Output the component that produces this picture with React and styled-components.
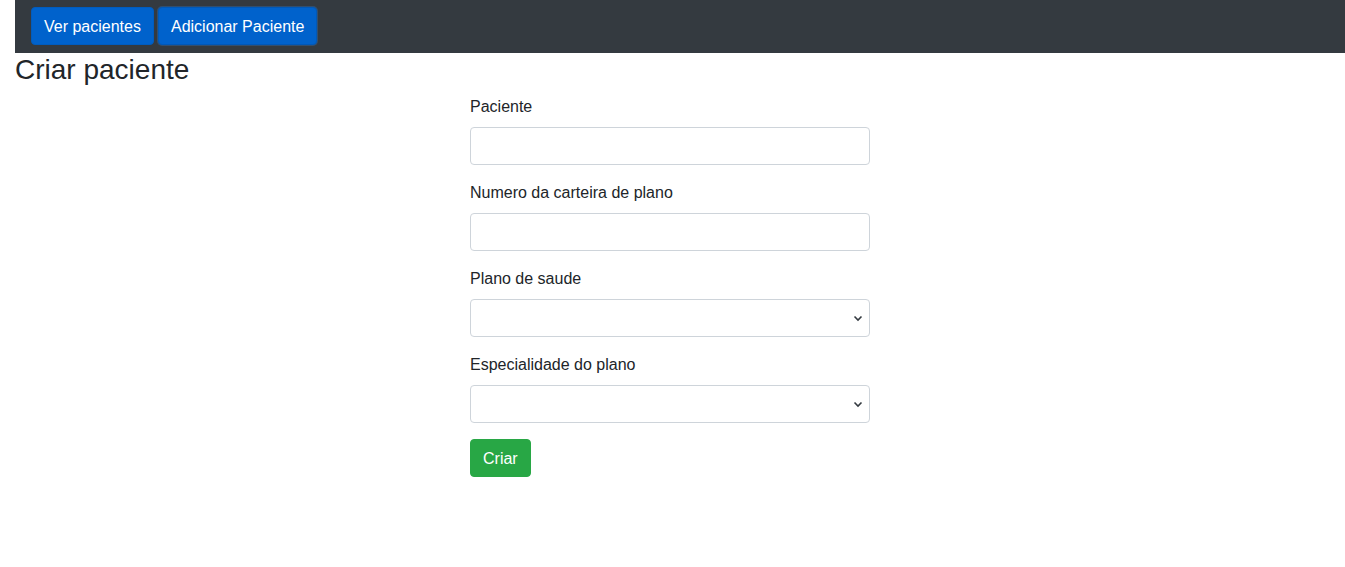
import React from 'react'
import styled, { createGlobalStyle } from 'styled-components'

const GlobalStyle = createGlobalStyle`
  body {
    margin: 0;
    font-family: "Liberation Sans", Arial, sans-serif;
    font-size: 16px;
    line-height: 1.5;
    color: #212529;
    background: #fff;
  }
  * { box-sizing: border-box; }
`

const Page = styled.div`
  padding-left: 15px;
`

const Navbar = styled.nav`
  background: #343a40;
  height: 53px;
  padding: 7px 16px 8px;
  display: flex;
  align-items: flex-start;
  gap: 4px;
`

const NavButton = styled.button`
  height: 38px;
  padding: 7px 12px 5px;
  font-family: inherit;
  font-size: 16px;
  line-height: 24px;
  color: #fff;
  background: #0062cc;
  border: 1px solid ${(props) => (props.$focused ? '#0058b8' : '#005cbf')};
  border-radius: 4px;
  box-shadow: ${(props) => (props.$focused ? '0 0 0 1px rgba(38, 143, 255, 0.25)' : 'none')};
  cursor: pointer;
`

const Title = styled.h3`
  margin: 0 0 8px;
  font-size: 28px;
  font-weight: 500;
  line-height: 1.2;
`

const FormRow = styled.div`
  display: flex;
  justify-content: center;
  padding-right: 20px;
`

const Form = styled.form`
  width: 400px;
`

const Group = styled.div`
  margin-bottom: 16px;
`

const Label = styled.label`
  display: block;
  margin-bottom: 8px;
`

const Input = styled.input`
  display: block;
  width: 100%;
  height: 38px;
  padding: 6px 12px;
  font: inherit;
  border: 1px solid #ced4da;
  border-radius: 4px;
  background: #fff;
`

const SelectBox = styled.div`
  position: relative;
  height: 38px;
  border: 1px solid #ced4da;
  border-radius: 4px;
  background: #fff;
`

const Chevron = styled.svg`
  position: absolute;
  right: 6px;
  top: 14px;
`

const SubmitButton = styled.button`
  height: 38px;
  padding: 7px 12px 5px;
  font-family: inherit;
  font-size: 16px;
  line-height: 24px;
  color: #fff;
  background: #28a745;
  border: 1px solid #28a745;
  border-radius: 4px;
  cursor: pointer;
`

function Select() {
  return (
    <SelectBox>
      <Chevron width="10" height="8" viewBox="0 0 10 8">
        <path d="M1.5 2.5 L5 6 L8.5 2.5" fill="none" stroke="#343a40" strokeWidth="1.6" />
      </Chevron>
    </SelectBox>
  )
}

export default function App() {
  return (
    <Page>
      <GlobalStyle />
      <Navbar>
        <NavButton>Ver pacientes</NavButton>
        <NavButton $focused>Adicionar Paciente</NavButton>
      </Navbar>
      <Title>Criar paciente</Title>
      <FormRow>
        <Form onSubmit={(e) => e.preventDefault()}>
          <Group>
            <Label>Paciente</Label>
            <Input type="text" />
          </Group>
          <Group>
            <Label>Numero da carteira de plano</Label>
            <Input type="text" />
          </Group>
          <Group>
            <Label>Plano de saude</Label>
            <Select />
          </Group>
          <Group>
            <Label>Especialidade do plano</Label>
            <Select />
          </Group>
          <SubmitButton type="submit">Criar</SubmitButton>
        </Form>
      </FormRow>
    </Page>
  )
}
